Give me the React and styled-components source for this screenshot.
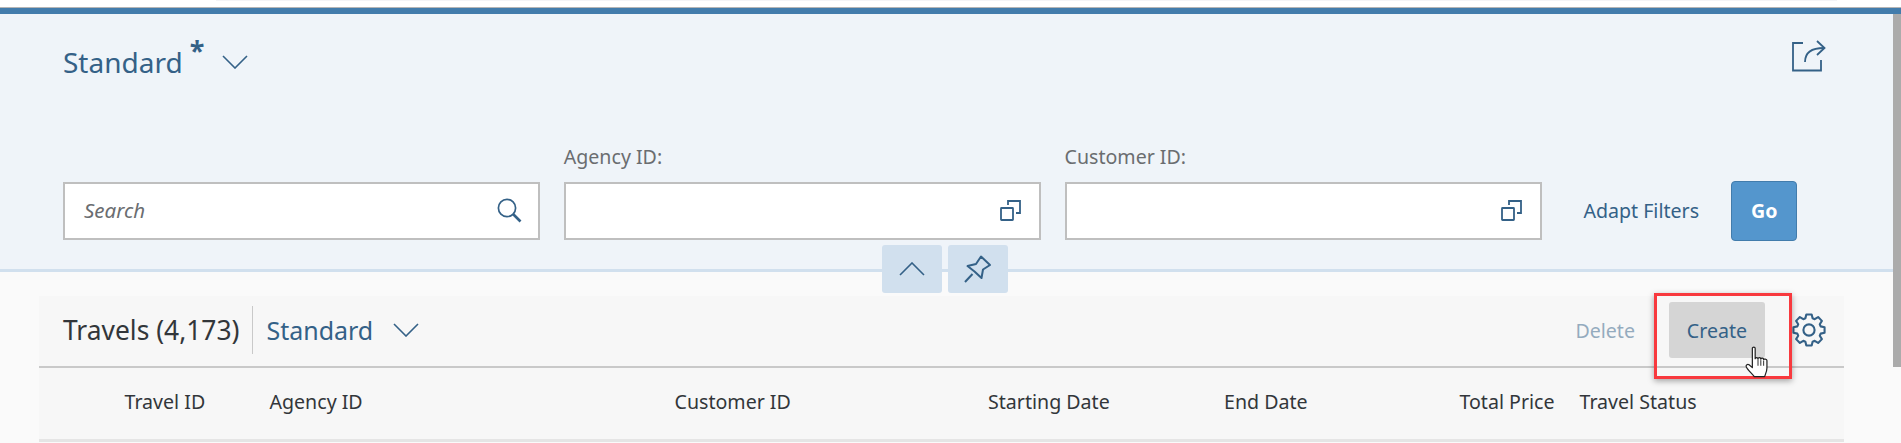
import React from "react";
import styled, { createGlobalStyle } from "styled-components";

const LINK = "#346187";
const TEXT = "#32363a";

const GlobalStyle = createGlobalStyle`
  html, body {
    margin: 0;
    padding: 0;
    background: #fafafa;
    overflow: hidden;
  }
  body {
    font-family: "Noto Sans", "Open Sans", sans-serif;
    color: ${TEXT};
  }
`;

// eight toothed outline for the settings icon
const gearPath = () => {
  const c = 17;
  const points = [];
  for (let i = 0; i < 8; i++) {
    const a = (i * Math.PI) / 4;
    [[12.2, -0.3], [15.8, -0.17], [15.8, 0.17], [12.2, 0.3]].forEach(([r, d]) => {
      points.push(`${(c + r * Math.sin(a + d)).toFixed(2)} ${(c - r * Math.cos(a + d)).toFixed(2)}`);
    });
  }
  return `M${points.join("L")}Z`;
};

const Chevron = ({ up }) => (
  <ChevronSvg width="26" height="14" viewBox="0 0 26 14" fill="none" stroke={LINK} strokeWidth="1.6">
    <path d={up ? "M1 13 13 1l12 12" : "M1 1l12 12L25 1"} />
  </ChevronSvg>
);

const ValueHelpIcon = () => (
  <ValueHelpSvg width="21" height="21" viewBox="0 0 21 21" fill="none" stroke={LINK} strokeWidth="1.8">
    <rect x="1" y="8" width="12" height="12" rx="0.5" />
    <path d="M8 5V1h12v12h-4" />
  </ValueHelpSvg>
);

const SearchIcon = () => (
  <svg width="25" height="25" viewBox="0 0 25 25" fill="none" stroke={LINK}>
    <circle cx="10" cy="10" r="8.6" strokeWidth="1.7" />
    <path d="M16 16l7.500 7.500" strokeWidth="2.6" />
  </svg>
);

const ShareIcon = () => (
  <svg width="34" height="32" viewBox="0 0 34 32" fill="none" stroke={LINK} strokeWidth="1.8">
    <path d="M11 3H1v27.500h28V20" />
    <path d="M13 22c0-9 6-14 19-14" />
    <path d="M25 1l7.500 7-7.500 7" />
  </svg>
);

const PinIcon = () => (
  <svg width="28" height="28" viewBox="0 0 28 28" fill="none" stroke={LINK} strokeWidth="2">
    <path d="M17 1.500 26 10l-7 4.500-1.500 8.500-7-6.500L3.500 11l8.500-2z" strokeLinejoin="round" />
    <path d="M8.500 19 1 27" />
  </svg>
);

const GearIcon = () => (
  <svg width="34" height="34" viewBox="0 0 34 34" fill="none" stroke={LINK} strokeWidth="2.1" strokeLinejoin="round">
    <circle cx="17" cy="17" r="5.6" />
    <path d={gearPath()} />
  </svg>
);

const HandCursor = () => (
  <HandSvg width="26" height="32" viewBox="0 0 27 34">
    <path
      d="M7.500 2.500c0-1.600 3-1.600 3 0v11c0-1.500 3-1.500 3 0 0-1.500 3-1.500 3 .5 0-1.500 3-1.500 3 .5 0-1 3.500-1 3.500 1v8c0 4-2 7.500-2.500 9H9.500C8 30 2 25 1 22c-.6-2 1.500-3 3-2l3.500 3z"
      fill="#fff"
      stroke="#222"
      strokeWidth="1.3"
      strokeLinejoin="round"
    />
    <path d="M13.500 14v7M16.500 15v6M19.500 15.500v5.500" stroke="#222" strokeWidth="1" fill="none" />
  </HandSvg>
);

const columns = [
  { label: "Travel ID" },
  { label: "Agency ID" },
  { label: "Customer ID" },
  { label: "Starting Date" },
  { label: "End Date" },
  { label: "Total Price", end: true },
  { label: "Travel Status" },
];

export default function App() {
  return (
    <>
      <GlobalStyle />
      <Page>
        <TopStrip>
          <TopEdge />
        </TopStrip>
        <Header>
          <VariantRow>
            <VariantTitle>Standard</VariantTitle>
            <Asterisk>*</Asterisk>
            <Chevron />
            <ShareSlot>
              <ShareIcon />
            </ShareSlot>
          </VariantRow>
          <FilterBar>
            <Field>
              <Input>
                <Placeholder>Search</Placeholder>
                <SearchIcon />
              </Input>
            </Field>
            <Field>
              <FieldLabel>Agency ID:</FieldLabel>
              <Input>
                <span />
                <ValueHelpIcon />
              </Input>
            </Field>
            <Field>
              <FieldLabel>Customer ID:</FieldLabel>
              <Input>
                <span />
                <ValueHelpIcon />
              </Input>
            </Field>
            <AdaptFilters>Adapt Filters</AdaptFilters>
            <GoButton>Go</GoButton>
          </FilterBar>
          <CollapseGroup>
            <CollapseButton>
              <Chevron up />
            </CollapseButton>
            <CollapseButton>
              <PinIcon />
            </CollapseButton>
          </CollapseGroup>
        </Header>
        <TableCard>
          <Toolbar>
            <TableTitle>Travels (4,173)</TableTitle>
            <Divider />
            <TableVariant>Standard</TableVariant>
            <Chevron />
            <Spacer />
            <DeleteLabel>Delete</DeleteLabel>
            <CreateButton>Create</CreateButton>
            <GearSlot>
              <GearIcon />
            </GearSlot>
          </Toolbar>
          <HeaderRow>
            {columns.map((col) => (
              <HeaderCell key={col.label} $end={col.end}>
                {col.label}
              </HeaderCell>
            ))}
          </HeaderRow>
          <Highlight />
          <HandCursor />
        </TableCard>
        <Scrollbar />
      </Page>
    </>
  );
}

const Page = styled.div`
  position: relative;
  width: 1901px;
  height: 443px;
  overflow: hidden;
  background: #fafafa;
`;

const TopStrip = styled.div`
  height: 7px;
  background: #fff;
  border-bottom: 1px solid #b5b5b5;
`;

const TopEdge = styled.div`
  width: 1621px;
  height: 1px;
  margin-left: 216px;
  background: #f3f4f7;
`;

const Header = styled.header`
  position: relative;
  height: 255px;
  background: #eff4f9;
  border-top: 6px solid #427cac;
  border-bottom: 3px solid #d1e0ee;
`;

const ChevronSvg = styled.svg`
  display: block;
  flex: none;
`;

const ValueHelpSvg = styled.svg`
  margin-right: 2px;
`;

const VariantRow = styled.div`
  display: flex;
  align-items: center;
  height: 36px;
  padding: 30px 75px 0 63px;
`;

const VariantTitle = styled.h1`
  margin: 0;
  font-size: 28px;
  font-weight: 400;
  color: ${LINK};
`;

const Asterisk = styled.span`
  align-self: flex-start;
  margin: -8px 18px 0 7px;
  font-size: 27px;
  font-weight: 700;
  line-height: 30px;
  color: ${LINK};
`;

const ShareSlot = styled.div`
  margin-left: auto;
  margin-top: -8px;
`;

const FilterBar = styled.div`
  display: flex;
  align-items: flex-end;
  height: 100px;
  margin-top: 60px;
  padding-left: 63px;
`;

const Field = styled.div`
  display: flex;
  flex-direction: column;
  gap: 13px;
  width: 477px;
  margin-right: 23.75px;
`;

const FieldLabel = styled.label`
  font-size: 19.6px;
  line-height: 24px;
  color: #6a6d70;
`;

const Input = styled.div`
  display: flex;
  align-items: center;
  justify-content: space-between;
  box-sizing: border-box;
  height: 58px;
  padding: 0 16px 2px 19px;
  background: #fff;
  border: 2px solid #bfbfbf;
`;

const Placeholder = styled.span`
  font-size: 20.5px;
  font-style: italic;
  color: #6a6d70;
`;

const AdaptFilters = styled.button`
  width: 116px;
  height: 58px;
  margin: 0 32px 0 18px;
  padding: 0 0 2px;
  border: 0;
  background: none;
  font: inherit;
  font-size: 19.6px;
  white-space: nowrap;
  color: ${LINK};
`;

const GoButton = styled.button`
  box-sizing: border-box;
  width: 66px;
  height: 60px;
  margin-bottom: -1px;
  padding: 0 0 2px;
  background: #5496cd;
  border: 1px solid #427cac;
  border-radius: 4px;
  font: inherit;
  font-size: 19.6px;
  font-weight: 700;
  color: #fff;
`;

const CollapseGroup = styled.div`
  position: absolute;
  top: 231px;
  left: 882px;
  display: flex;
  gap: 6px;
`;

const CollapseButton = styled.button`
  display: flex;
  align-items: center;
  justify-content: center;
  width: 60px;
  height: 48px;
  padding: 0;
  background: #d1e0ee;
  border: 0;
  border-radius: 3px;
`;

const TableCard = styled.section`
  position: relative;
  width: 1805px;
  margin: 24px 0 0 39px;
  background: #f7f7f7;
`;

const Toolbar = styled.div`
  display: flex;
  align-items: center;
  box-sizing: border-box;
  height: 72px;
  padding: 0 18px 2px 24px;
  border-bottom: 2px solid #c9c9c9;
`;

const TableTitle = styled.h2`
  margin: 0;
  font-size: 26.4px;
  font-weight: 400;
  white-space: nowrap;
  color: ${TEXT};
`;

const Divider = styled.div`
  width: 1px;
  height: 48px;
  margin: 0 13px 0 13px;
  background: #c9c9c9;
`;

const TableVariant = styled.span`
  margin-right: 20px;
  font-size: 25px;
  color: ${LINK};
`;

const Spacer = styled.div`
  flex: 1;
`;

const DeleteLabel = styled.span`
  font-size: 19.6px;
  color: ${LINK};
  opacity: 0.5;
`;

const CreateButton = styled.button`
  width: 96px;
  height: 56px;
  margin-left: 34px;
  padding: 0;
  background: #d5d5d5;
  border: 0;
  border-radius: 3px;
  font: inherit;
  font-size: 19.6px;
  color: ${LINK};
`;

const GearSlot = styled.div`
  margin-left: 27px;
  line-height: 0;
`;

const HeaderRow = styled.div`
  display: grid;
  grid-template-columns: 145px 405px 313.5px 236px 234.500px 121px auto;
  align-items: center;
  box-sizing: border-box;
  height: 74px;
  padding: 0 0 4px 85.5px;
  border-bottom: 3px solid #e5e5e5;
`;

const HeaderCell = styled.div`
  font-size: 19.6px;
  color: ${TEXT};
  white-space: nowrap;
  text-align: ${(p) => (p.$end ? "right" : "left")};
  padding-right: ${(p) => (p.$end ? "25px" : "0")};
`;

const Highlight = styled.div`
  position: absolute;
  top: -3px;
  left: 1615px;
  width: 138px;
  height: 86px;
  box-sizing: border-box;
  border: 3px solid #f8393e;
  box-shadow: 0 2px 6px rgba(0, 0, 0, 0.35);
`;

const HandSvg = styled.svg`
  position: absolute;
  top: 50px;
  left: 1706px;
`;

const Scrollbar = styled.div`
  position: absolute;
  top: 14px;
  right: 0;
  width: 8px;
  height: 353px;
  background: #ababab;
`;
